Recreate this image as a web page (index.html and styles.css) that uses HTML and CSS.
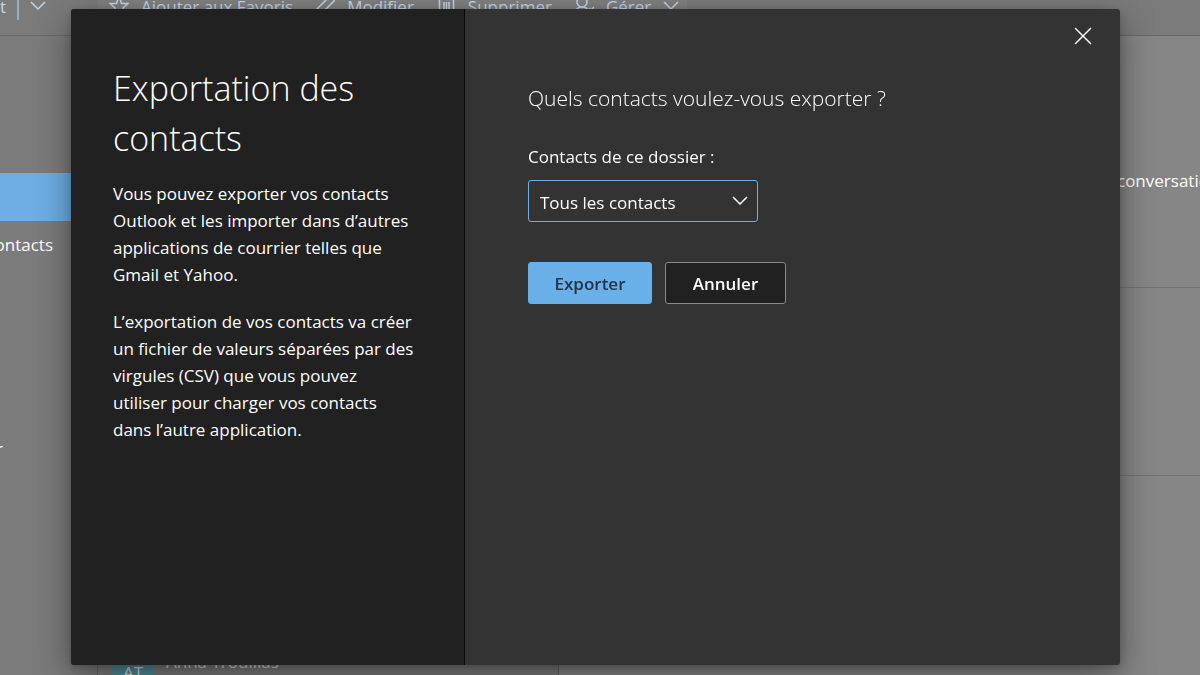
FILE: index.html
```html
<!DOCTYPE html>
<html lang="fr">
<head>
<meta charset="utf-8">
<meta name="viewport" content="width=device-width, initial-scale=1">
<title>Exportation des contacts</title>
<link rel="stylesheet" href="styles.css">
</head>
<body>
<div class="app">
  <header class="toolbar">
    <div class="toolbar-new">
      <span class="new-label">t</span>
      <span class="split"></span>
      <svg class="chevron" viewBox="0 0 16 10"><path d="M1 1l7 7 7-7"/></svg>
    </div>
    <nav class="commands">
      <button class="command" type="button">
        <svg class="icon" viewBox="0 0 20 20"><path d="M10 0l2.500 7.500H19l-5 4.500 2.500 7L10 15l-6.500 4L6 12 1 7.500h6.500z"/></svg>
        Ajouter aux Favoris
      </button>
      <button class="command" type="button">
        <svg class="icon" viewBox="0 0 20 20"><path d="M1 14L14 1c3-3 8 1 5 4L9 15M12 12l8-8M1 14l-1 5 5-1 4-3"/></svg>
        Modifier
      </button>
      <button class="command" type="button">
        <svg class="icon" viewBox="0 0 20 20"><path d="M1 3h19M7 3V1h7v2M3.500 3v16h14V3M8 6v10M10.500 6v10M13 6v10"/></svg>
        Supprimer
      </button>
      <button class="command" type="button">
        <svg class="icon" viewBox="0 0 20 20"><circle cx="8" cy="6" r="5"/><path d="M1 16c1-3 3-5 7-5s5 1 6 3M15 12l2 2 3-3"/></svg>
        Gérer
        <svg class="chevron" viewBox="0 0 16 10"><path d="M1 1l7 7 7-7"/></svg>
      </button>
    </nav>
  </header>
  <div class="workspace">
    <aside class="folders">
      <div class="folder-selected"></div>
      <div class="folder">ontacts</div>
      <div class="folder-last">r</div>
    </aside>
    <section class="people">
      <div class="person">
        <span class="avatar">AT</span>
        <span class="person-name">Anna Trouillas</span>
      </div>
    </section>
    <section class="details">
      <div class="detail-tab">conversatio</div>
      <div class="detail-row"></div>
    </section>
  </div>
</div>

<div class="overlay">
  <div class="dialog" role="dialog" aria-modal="true" aria-labelledby="dialog-title">
    <section class="intro">
      <h1 class="title" id="dialog-title">Exportation des contacts</h1>
      <p class="text">Vous pouvez exporter vos contacts Outlook et les importer dans d’autres applications de courrier telles que Gmail et Yahoo.</p>
      <p class="text">L’exportation de vos contacts va créer un fichier de valeurs séparées par des virgules (CSV) que vous pouvez<br> utiliser pour charger vos contacts<br> dans l’autre application.</p>
    </section>
    <form class="form">
      <button class="close" type="button" aria-label="Fermer">
        <svg viewBox="0 0 18 18"><path d="M1 1l16 16M17 1L1 17"/></svg>
      </button>
      <h2 class="question">Quels contacts voulez-vous exporter ?</h2>
      <label class="label" for="folder">Contacts de ce dossier :</label>
      <div class="select-wrap">
        <select class="select" id="folder"><option>Tous les contacts</option></select>
        <svg class="select-arrow" viewBox="0 0 16 10"><path d="M1 1l7 7 7-7"/></svg>
      </div>
      <div class="actions">
        <button class="button button-primary" type="button">Exporter</button>
        <button class="button" type="button">Annuler</button>
      </div>
    </form>
  </div>
</div>
</body>
</html>
```
FILE: styles.css
```css
* {
  box-sizing: border-box;
}

body {
  margin: 0;
  font-family: "Open Sans", "Noto Sans", sans-serif;
  font-size: 17px;
  color: #fff;
  background: #7b7b7b;
}

button,
select {
  font: inherit;
  color: inherit;
}

svg {
  display: block;
  flex: none;
  fill: none;
  stroke: currentColor;
  stroke-width: 1.5;
}

.app {
  height: 100vh;
  display: flex;
  flex-direction: column;
  overflow: hidden;
}

.toolbar {
  display: flex;
  height: 36px;
  flex: none;
  border-bottom: 1px solid #686868;
  background: #7b7b7b;
  color: #c3d4ea;
}

.toolbar-new {
  width: 98px;
  height: 20px;
  display: flex;
  align-items: flex-start;
  gap: 11px;
}

.toolbar-new .chevron {
  margin-top: 1px;
}

.new-label {
  line-height: 14px;
}

.split {
  width: 2px;
  height: 20px;
  background: #91aecb;
}

.chevron {
  width: 16px;
  height: 10px;
}

.commands {
  display: flex;
  gap: 22px;
  height: 35px;
  padding: 0 8px 0 11px;
  background: #808080;
}

.command {
  display: flex;
  align-items: center;
  gap: 12px;
  height: 12px;
  padding: 0;
  border: 0;
  background: none;
  white-space: nowrap;
}

.icon {
  width: 20px;
  height: 20px;
}

.workspace {
  flex: 1;
  display: flex;
}

.folders {
  flex: none;
  width: 98px;
  padding-top: 137px;
  border-right: 1px solid #686868;
  line-height: 48px;
}

.folder-selected {
  height: 48px;
  margin-right: -1px;
  background: #6eaee4;
}

.folder {
  width: 53px;
  display: flex;
  justify-content: flex-end;
}

.folder-last {
  width: 3px;
  margin-top: 156px;
  display: flex;
  justify-content: flex-end;
}

.people {
  flex: none;
  width: 461px;
  display: flex;
  flex-direction: column;
  justify-content: flex-end;
  border-right: 1px solid #606060;
}

.person {
  display: flex;
  align-items: flex-start;
  gap: 12px;
  height: 22px;
  padding-left: 14px;
  color: #d8d8d8;
}

.avatar {
  width: 42px;
  height: 42px;
  background: #508c98;
  line-height: 40px;
  text-align: center;
}

.person-name {
  line-height: 18px;
}

.details {
  flex: 1;
  background: #868686;
}

.detail-tab {
  height: 252px;
  padding-top: 133px;
  padding-left: 558px;
  border-bottom: 1px solid #727272;
  white-space: nowrap;
}

.detail-row {
  height: 188px;
  border-bottom: 1px solid #727272;
}

.overlay {
  position: fixed;
  inset: 0;
  display: flex;
  padding: 9px 80px 10px 71px;
}

.dialog {
  flex: 1;
  display: flex;
  border-radius: 3px;
  overflow: hidden;
  background: #333;
  box-shadow: 0 12px 36px rgba(0, 0, 0, 0.4), 0 2px 8px rgba(0, 0, 0, 0.2);
}

.intro {
  width: 394px;
  flex: none;
  padding: 54px 42px 40px;
  background: #212121;
  border-right: 1px solid #080808;
}

.title {
  margin: 0 0 17px;
  font-size: 34px;
  font-weight: 300;
  line-height: 50px;
}

.text {
  margin: 0 0 20px;
  line-height: 27px;
}

.form {
  position: relative;
  flex: 1;
  padding: 73px 63px 40px;
}

.close {
  position: absolute;
  top: 18px;
  right: 28px;
  padding: 0;
  border: 0;
  background: none;
}

.close svg {
  width: 18px;
  height: 18px;
}

.question {
  margin: 0 0 29px;
  font-size: 21px;
  font-weight: 300;
  line-height: 32px;
}

.label {
  display: block;
  margin-bottom: 9px;
  line-height: 28px;
}

.select-wrap {
  position: relative;
  width: 230px;
}

.select {
  appearance: none;
  width: 100%;
  height: 42px;
  padding: 2px 40px 0 11px;
  border: 1px solid #6eaee4;
  border-radius: 3px;
  background: #333;
}

.select-arrow {
  position: absolute;
  top: 16px;
  right: 10px;
  width: 16px;
  height: 10px;
  pointer-events: none;
}

.actions {
  display: flex;
  gap: 13px;
  margin-top: 40px;
}

.button {
  min-width: 121px;
  height: 42px;
  border: 1px solid #8a8a8a;
  border-radius: 3px;
  background: #212121;
  font-weight: 600;
}

.button-primary {
  min-width: 124px;
  border-color: #69afe8;
  background: #69afe8;
  color: #243447;
}
```
